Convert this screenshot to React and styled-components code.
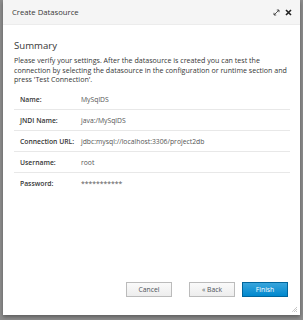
import React from "react";
import styled, { createGlobalStyle } from "styled-components";

const Global = createGlobalStyle`
  html, body { margin: 0; padding: 0; }
  body {
    background: #8d8d8d;
    font-family: "Open Sans", "Liberation Sans", sans-serif;
    width: 303px; height: 320px; overflow: hidden;
  }
`;

const Dialog = styled.div`
  margin: 0 3px;
  width: 297px;
  height: 315px;
  background: #fff;
  display: flex;
  flex-direction: column;
  position: relative;
  box-shadow: 0 2px 4px rgba(0,0,0,0.35);
`;

const Header = styled.div`
  height: 25px;
  background: #f5f5f5;
  border-bottom: 1px solid #ececec;
  display: flex;
  align-items: center;
  padding: 0 8px 0 9px;
  box-sizing: border-box;
`;

const Title = styled.div`
  flex: 1;
  font-size: 7.7px;
  color: #363636;
`;

const HeaderIcons = styled.div`
  display: flex;
  align-items: center;
  gap: 5px;
`;

const Body = styled.div`
  flex: 1;
  padding: 14px 9px 0 11px;
  display: flex;
  flex-direction: column;
`;

const Heading = styled.div`
  font-size: 9.6px;
  color: #363636;
  line-height: 14px;
  margin-bottom: 3px;
`;

const Para = styled.p`
  margin: 0 0 4px;
  font-size: 7.1px;
  line-height: 9.7px;
  color: #363636;
`;

const Row = styled.div`
  display: flex;
  align-items: center;
  height: 21px;
  border-bottom: ${(p) => (p.$last ? "none" : "1px solid #e8e8e8")};
  box-sizing: border-box;
  margin-right: 1px;
`;

const Label = styled.div`
  width: 61px;
  padding-left: 6px;
  font-size: 6.8px;
  font-weight: 600;
  color: #363636;
`;

const Value = styled.div`
  font-size: 6.8px;
  color: #555;
`;

const Footer = styled.div`
  display: flex;
  justify-content: flex-end;
  gap: 7px;
  padding: 0 12px 18px 0;
`;

const Button = styled.button`
  width: 46px;
  height: 15px;
  padding: 0;
  font-family: inherit;
  font-size: 6.8px;
  border: 1px solid ${(p) => (p.$primary ? "#00659c" : "#bbb")};
  background: ${(p) => (p.$primary ? "linear-gradient(#39a5dc, #0088ce)" : "linear-gradient(#fafafa, #ededed)")};
  color: ${(p) => (p.$primary ? "#fff" : "#4d5258")};
  margin-left: ${(p) => p.$gap || 0}px;
  box-sizing: border-box;
`;

const Grip = styled.svg`
  position: absolute;
  right: 2px;
  bottom: 2px;
`;

const rows = [
  ["Name:", "MySqlDS"],
  ["JNDI Name:", "java:/MySqlDS"],
  ["Connection URL:", "jdbc:mysql://localhost:3306/project2db"],
  ["Username:", "root"],
  ["Password:", "***********"],
];

export default function App() {
  return (
    <>
      <Global />
      <Dialog>
        <Header>
          <Title>Create Datasource</Title>
          <HeaderIcons>
            <svg width="7" height="7" viewBox="0 0 7 7">
              <path d="M1 6 L6 1" stroke="#444" strokeWidth="0.9" />
              <path d="M3.8 1 H6 V3.2" fill="none" stroke="#444" strokeWidth="0.9" />
              <path d="M1 3.8 V6 H3.2" fill="none" stroke="#444" strokeWidth="0.9" />
            </svg>
            <svg width="7" height="7" viewBox="0 0 7 7">
              <path d="M1 1 L6 6 M6 1 L1 6" stroke="#222" strokeWidth="1.6" />
            </svg>
          </HeaderIcons>
        </Header>
        <Body>
          <Heading>Summary</Heading>
          <Para>
            Please verify your settings. After the datasource is created you can test the connection by selecting the datasource in the configuration or runtime section and press 'Test Connection'.
          </Para>
          <div>
            {rows.map(([l, v], i) => (
              <Row key={l} $last={i === rows.length - 1}>
                <Label>{l}</Label>
                <Value>{v}</Value>
              </Row>
            ))}
          </div>
        </Body>
        <Footer>
          <Button>Cancel</Button>
          <Button $gap={10}>« Back</Button>
          <Button $primary>Finish</Button>
        </Footer>
        <Grip width="7" height="7" viewBox="0 0 7 7">
          <path d="M6 1 L1 6 M6 3 L3 6 M6 5 L5 6" stroke="#999" strokeWidth="0.8" strokeDasharray="1 0.6" />
        </Grip>
      </Dialog>
    </>
  );
}
